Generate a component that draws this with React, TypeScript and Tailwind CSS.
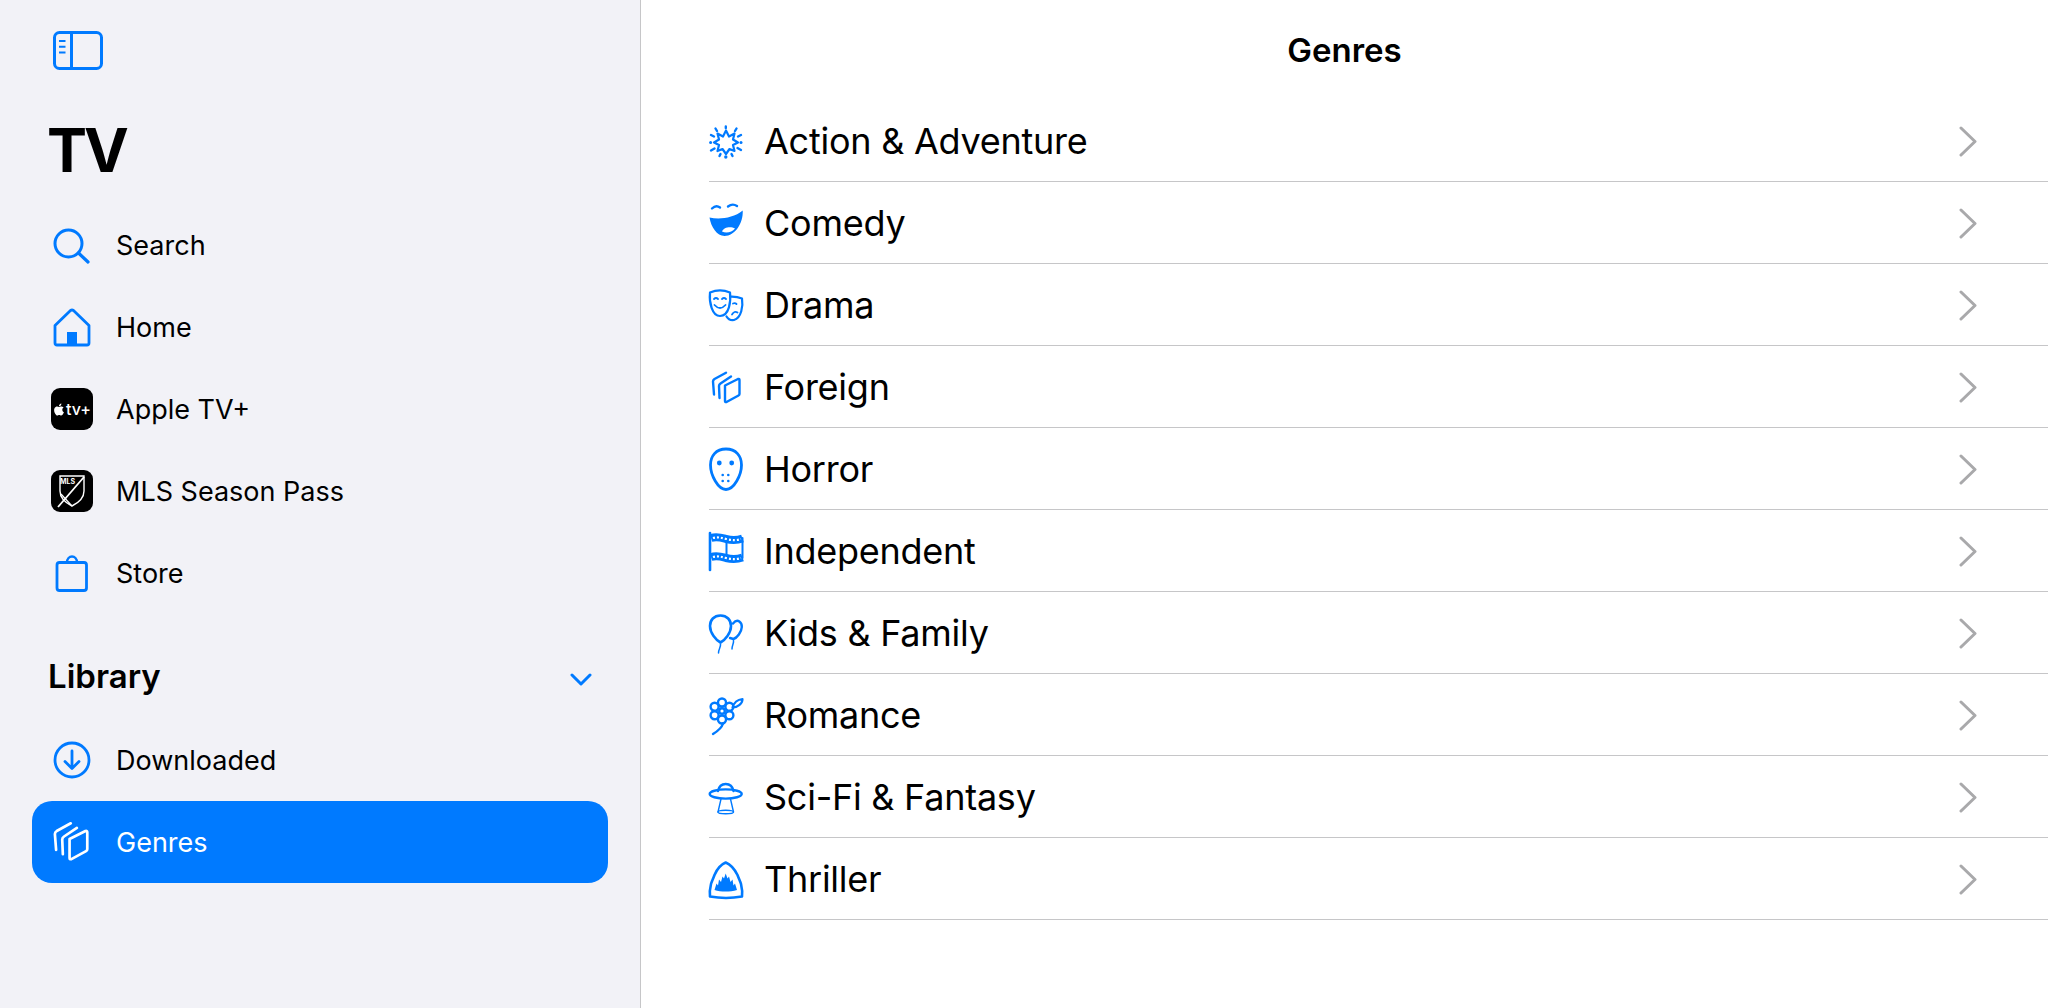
import type { ReactNode } from "react";
import { SiApple } from "react-icons/si";

const BLUE = "#007AFF";

function Glyph({ children, w = 36, h = 48 }: { children: ReactNode; w?: number; h?: number }) {
  return (
    <svg width={w} height={h} viewBox={`0 0 ${w} ${h}`} fill="none" stroke={BLUE} strokeWidth="2.4" strokeLinecap="round" strokeLinejoin="round" className="shrink-0 overflow-visible">
      {children}
    </svg>
  );
}

function PanelsShape({ color = BLUE, width = 2.4 }: { color?: string; width?: number }) {
  return (
    <g stroke={color} strokeWidth={width} strokeLinecap="round" strokeLinejoin="round" fill="none">
      <path d="M16 15.5 L29 9 Q30.5 8.5 30.5 10 V24 Q30.5 25 29.5 25.5 L17.5 32 Q16 32.5 16 31Z" />
      <path d="M10.5 28 L10 16 Q10 14.5 11.5 13.5 L22 6.5" />
      <path d="M5 24.5 L4 11.5 Q4 10 5.5 9 L17 2.7" />
    </g>
  );
}

const genreIcons: Record<string, ReactNode> = {
  action: (
    <Glyph>
      <path d="M17 13.5 L20 19.5 L25.5 16.5 L24 22.5 L29 25.5 L24 28 L25.5 34 L20.5 32 L17 37 L13.5 32 L8.5 34 L10 28 L5 25.5 L10 22.5 L8.5 16.5 L14 19.5Z" strokeWidth="2.2" />
      <path d="M16.8 9.5 V11 M27.5 11.5 L26 14 M6.5 11.5 L8 14 M32 18 L29 19.5 M2 18 L5 19.5 M32 33 L28.5 31 M2 33.5 L5.5 31.5 M10.5 39 L11.5 37 M23.5 39 L22.5 37" strokeWidth="2.4" />
      <circle cx="1.6" cy="25.5" r="1.5" fill={BLUE} stroke="none" />
      <circle cx="32" cy="25.5" r="1.5" fill={BLUE} stroke="none" />
      <circle cx="16.8" cy="40" r="1.7" fill={BLUE} stroke="none" />
    </Glyph>
  ),
  comedy: (
    <Glyph>
      <path d="M3 9.5 Q7 5.5 11 8.5 M19 7.5 Q23.5 4 28 7" strokeWidth="2.4" />
      <path d="M0.5 18.5 C10 20.5 24 19.5 33.7 11.5 C34.5 24 26 37 15.5 37 C8 37 2 28 0.5 18.5Z" fill={BLUE} stroke="none" />
      <path d="M13 32.5 C14.5 28 22 27 26 29.5 C23 33.5 17 34.5 13 32.5Z" fill="#fff" stroke="none" />
    </Glyph>
  ),
  drama: (
    <Glyph>
      <path d="M18 16 C22 15.5 28 15.5 33 17.5 C34.2 25 32.5 37 25 39 C22 39.5 19 38 17.5 35.5" strokeWidth="2.2" />
      <path d="M1 11.5 C7 9 15 9 21 11.5 C22 20 20.5 35 11 35 C3 35 0 21 1 11.5Z" fill="#fff" strokeWidth="2.2" />
      <path d="M5 18 Q7 16 9 18 M13 18 Q15 16 17 18 M5.5 24 Q11 30 16.5 24" strokeWidth="1.8" />
      <path d="M24 22.5 Q26 21.5 27.5 23 M23 33.5 Q25.5 29.5 28.5 31.5" strokeWidth="1.8" />
    </Glyph>
  ),
  foreign: (
    <Glyph>
      <g transform="translate(0 7)">
        <PanelsShape />
      </g>
    </Glyph>
  ),
  horror: (
    <Glyph>
      <path d="M17 4 C7 4 1.5 11 1.5 20 C1.5 30 9 44.5 17 44.5 C25 44.5 32.5 30 32.5 20 C32.5 11 27 4 17 4Z" strokeWidth="2.8" />
      <circle cx="10.3" cy="18" r="2.4" fill={BLUE} stroke="none" />
      <circle cx="22.7" cy="18" r="2.4" fill={BLUE} stroke="none" />
      <g fill={BLUE} stroke="none">
        <circle cx="13.7" cy="30" r="1.3" />
        <circle cx="19.3" cy="30" r="1.3" />
        <circle cx="13.7" cy="36" r="1.3" />
        <circle cx="19.3" cy="36" r="1.3" />
      </g>
    </Glyph>
  ),
  independent: (
    <Glyph>
      <path d="M1 6 V43" strokeWidth="2.6" />
      <path d="M2 11 C8 9 12 10.5 17 12 C23 13.5 28 13.5 33.5 11.5" strokeWidth="8" strokeLinecap="butt" />
      <path d="M2 30 C8 28 12 29.5 17 31 C23 32.5 28 32.5 33.5 30.5" strokeWidth="8" strokeLinecap="butt" />
      <path d="M4 11 C8 9.7 12 10.7 17 12 C23 13.5 28 13.5 32 12" stroke="#fff" strokeWidth="2.2" strokeDasharray="2 2" strokeLinecap="butt" />
      <path d="M4 30 C8 28.7 12 29.7 17 31 C23 32.5 28 32.5 32 31" stroke="#fff" strokeWidth="2.2" strokeDasharray="2 2" strokeLinecap="butt" />
      <path d="M33.5 11 V31 M17.5 14 V29" strokeWidth="2" />
    </Glyph>
  ),
  kids: (
    <Glyph>
      <path d="M24 14.5 C29 8.5 33 14 32.8 18 C32.6 23 28 29 24.5 30 L21 29" strokeWidth="2.4" />
      <path d="M11.5 6.5 C5 6.5 1 11 1 17 C1 24 7 31 11.5 33.5 C16 31 22 24 22 17 C22 11 18 6.5 11.5 6.5Z" strokeWidth="2.6" fill="#fff" />
      <path d="M11.5 35 C12 38 9.5 40 9.5 44 M24.5 31.5 C25 34.5 23 36 23 40" strokeWidth="1.5" />
    </Glyph>
  ),
  romance: (
    <Glyph>
      <g strokeWidth="2.4">
        <circle cx="13" cy="11.5" r="4" />
        <circle cx="20.4" cy="15.7" r="4" />
        <circle cx="20.4" cy="24.3" r="4" />
        <circle cx="13" cy="28.5" r="4" />
        <circle cx="5.6" cy="24.3" r="4" />
        <circle cx="5.6" cy="15.7" r="4" />
        <circle cx="13" cy="20" r="2.8" />
      </g>
      <path d="M23.5 16.5 C25 11.5 29 8.5 33.5 8 C33.5 12.5 29 16.5 23.5 16.5Z" strokeWidth="2.2" />
      <path d="M14 32.5 C13 36 9 40 4 43" strokeWidth="2.4" />
    </Glyph>
  ),
  scifi: (
    <Glyph>
      <path d="M9 18 C10 13 13 11 16.7 11 C20.5 11 23.5 13 24.5 18" strokeWidth="2.4" />
      <ellipse cx="16.7" cy="21" rx="16" ry="4.6" strokeWidth="2.4" />
      <path d="M12 26 L9 39 M21.5 26 L24.5 39" strokeWidth="1.4" />
      <ellipse cx="16.7" cy="39" rx="7.8" ry="1.8" strokeWidth="1.4" />
    </Glyph>
  ),
  thriller: (
    <Glyph>
      <path d="M16.7 7.5 C12 9.5 8 14 5.5 20 C4 24 2.5 27 2 29 C0.8 34 0.5 38 1 41.5 C11 43.3 23 43.3 33 41.5 C33.5 38 33.2 34 32 29 C31.5 27 30 24 28.5 20 C25.5 14 21.5 9.5 16.7 7.5Z" strokeWidth="2.6" />
      <path d="M5.5 35 L7.5 28.5 L9 30.5 L10 24.5 L12 27 L13.5 21.5 L15 23.5 L16.7 18.5 L18.5 23.5 L20 21.5 L21.5 27 L23.5 24.5 L24.5 30.5 L26 28.5 L28 35 C21 37 12 37 5.5 35Z" fill={BLUE} stroke="none" />
    </Glyph>
  ),
};

const genres = [
  { name: "Action & Adventure", icon: "action" },
  { name: "Comedy", icon: "comedy" },
  { name: "Drama", icon: "drama" },
  { name: "Foreign", icon: "foreign" },
  { name: "Horror", icon: "horror" },
  { name: "Independent", icon: "independent" },
  { name: "Kids & Family", icon: "kids" },
  { name: "Romance", icon: "romance" },
  { name: "Sci-Fi & Fantasy", icon: "scifi" },
  { name: "Thriller", icon: "thriller" },
];

function SideIcon({ children }: { children: ReactNode }) {
  return (
    <svg width="44" height="44" viewBox="0 0 44 44" fill="none" stroke={BLUE} strokeWidth="2.8" strokeLinecap="round" strokeLinejoin="round" className="shrink-0">
      {children}
    </svg>
  );
}

function SideItem({ icon, label, active = false }: { icon: ReactNode; label: string; active?: boolean }) {
  return (
    <div className={`flex h-[82px] items-center gap-[22px] rounded-[20px] px-[18px] text-[27px] ${active ? "bg-[#007AFF] text-white" : "text-black"}`}>
      <div className="flex h-[44px] w-[44px] shrink-0 items-center justify-center">{icon}</div>
      <span className="pt-[2px]">{label}</span>
    </div>
  );
}

export default function App() {
  return (
    <div className="flex h-screen w-full overflow-hidden bg-white text-black font-['Inter','Liberation_Sans',sans-serif]">
      <aside className="h-full w-[641px] shrink-0 border-r border-[#c6c6c8] bg-[#F2F2F7] pt-[31px]">
        <div className="pl-[53px]">
          <svg width="50" height="39" viewBox="0 0 50 39" fill="none" stroke={BLUE} strokeWidth="3" className="block">
            <rect x="1.5" y="1.5" width="47" height="36" rx="5" />
            <path d="M18.5 1.5 V37.5" />
            <path d="M6 10 H12.5 M6 15.7 H12.5 M6 21.4 H12.5" strokeWidth="2" />
          </svg>
        </div>
        <h1 className="mt-[50px] mb-[24px] h-[60px] pl-[47px] text-[60px] font-bold leading-[60px] tracking-[-3px]">TV</h1>
        <nav className="px-[32px]">
          <SideItem
            label="Search"
            icon={
              <SideIcon>
                <circle cx="18.5" cy="20.5" r="13.5" strokeWidth="3" />
                <path d="M28.5 30 L38 39" strokeWidth="3.2" />
              </SideIcon>
            }
          />
          <SideItem
            label="Home"
            icon={
              <SideIcon>
                <path d="M5 20.5 L20.5 5.5 Q22 4.5 23.5 5.5 L39 20.5 V38 Q39 40 37 40 H7 Q5 40 5 38Z" />
                <rect x="17" y="27" width="10" height="13" fill={BLUE} stroke="none" />
              </SideIcon>
            }
          />
          <SideItem
            label="Apple TV+"
            icon={
              <div className="flex h-[42px] w-[42px] items-center justify-center gap-[1px] rounded-[9px] bg-black text-[16px] font-medium leading-none text-white">
                <SiApple className="h-[13px] w-[12px]" />
                <span>tv+</span>
              </div>
            }
          />
          <SideItem
            label="MLS Season Pass"
            icon={
              <div className="relative flex h-[42px] w-[42px] items-center justify-center rounded-[9px] bg-black">
                <svg width="30" height="36" viewBox="0 0 30 36" fill="none" stroke="#fff" strokeWidth="1.4">
                  <path d="M3 3 H27 V18 C27 25 21 30 15 33 C9 30 3 25 3 18Z" />
                  <path d="M27 4 L1 34" strokeWidth="1.8" />
                  <path d="M4 21 L15 33" strokeWidth="1.2" />
                </svg>
                <span className="absolute left-[9px] top-[8px] text-[7px] font-bold leading-none text-white">MLS</span>
              </div>
            }
          />
          <SideItem
            label="Store"
            icon={
              <SideIcon>
                <path d="M9.5 11.5 H34 Q36.5 11.5 36.5 14 V37 Q36.5 39.5 34 39.5 H9.5 Q7 39.5 7 37 V14 Q7 11.5 9.5 11.5Z" />
                <path d="M17 11.5 C17 3.5 27 3.5 27 11.5" strokeWidth="2.4" />
              </SideIcon>
            }
          />
        </nav>
        <div className="mt-[19px] flex h-[86px] items-center justify-between pl-[48px] pr-[48px]">
          <span className="pt-[2px] text-[33px] font-semibold">Library</span>
          <svg width="22" height="13" viewBox="0 0 22 13" fill="none" stroke={BLUE} strokeWidth="3" strokeLinecap="round" strokeLinejoin="round" className="mt-[6px]">
            <path d="M2 2 L11 11 L20 2" />
          </svg>
        </div>
        <div className="px-[32px]">
          <SideItem
            label="Downloaded"
            icon={
              <SideIcon>
                <circle cx="22" cy="22" r="17" />
                <path d="M22 13 V30 M15 23.5 L22 30.5 L29 23.5" />
              </SideIcon>
            }
          />
          <SideItem
            label="Genres"
            active
            icon={
              <svg width="44" height="44" viewBox="0 0 36 36" className="shrink-0">
                <PanelsShape color="#fff" width={2.2} />
              </svg>
            }
          />
        </div>
      </aside>
      <main className="min-w-0 flex-1 pl-[68px]">
        <div className="-ml-[68px] flex h-[100px] items-center justify-center pt-[2px] text-[33px] font-semibold">Genres</div>
        <ul>
          {genres.map((g) => (
            <li key={g.name} className="flex h-[82px] items-center border-b border-[#c6c6c8] pr-[71px]">
              <div className="w-[55px] shrink-0">{genreIcons[g.icon]}</div>
              <span className="flex-1 text-[36px] tracking-[-0.25px]">{g.name}</span>
              <svg width="18" height="31" viewBox="0 0 18 31" fill="none" stroke="#a9a9ab" strokeWidth="3" strokeLinecap="round" strokeLinejoin="round" className="mt-[2px]">
                <path d="M2 2 L16 15.5 L2 29" />
              </svg>
            </li>
          ))}
        </ul>
      </main>
    </div>
  );
}
